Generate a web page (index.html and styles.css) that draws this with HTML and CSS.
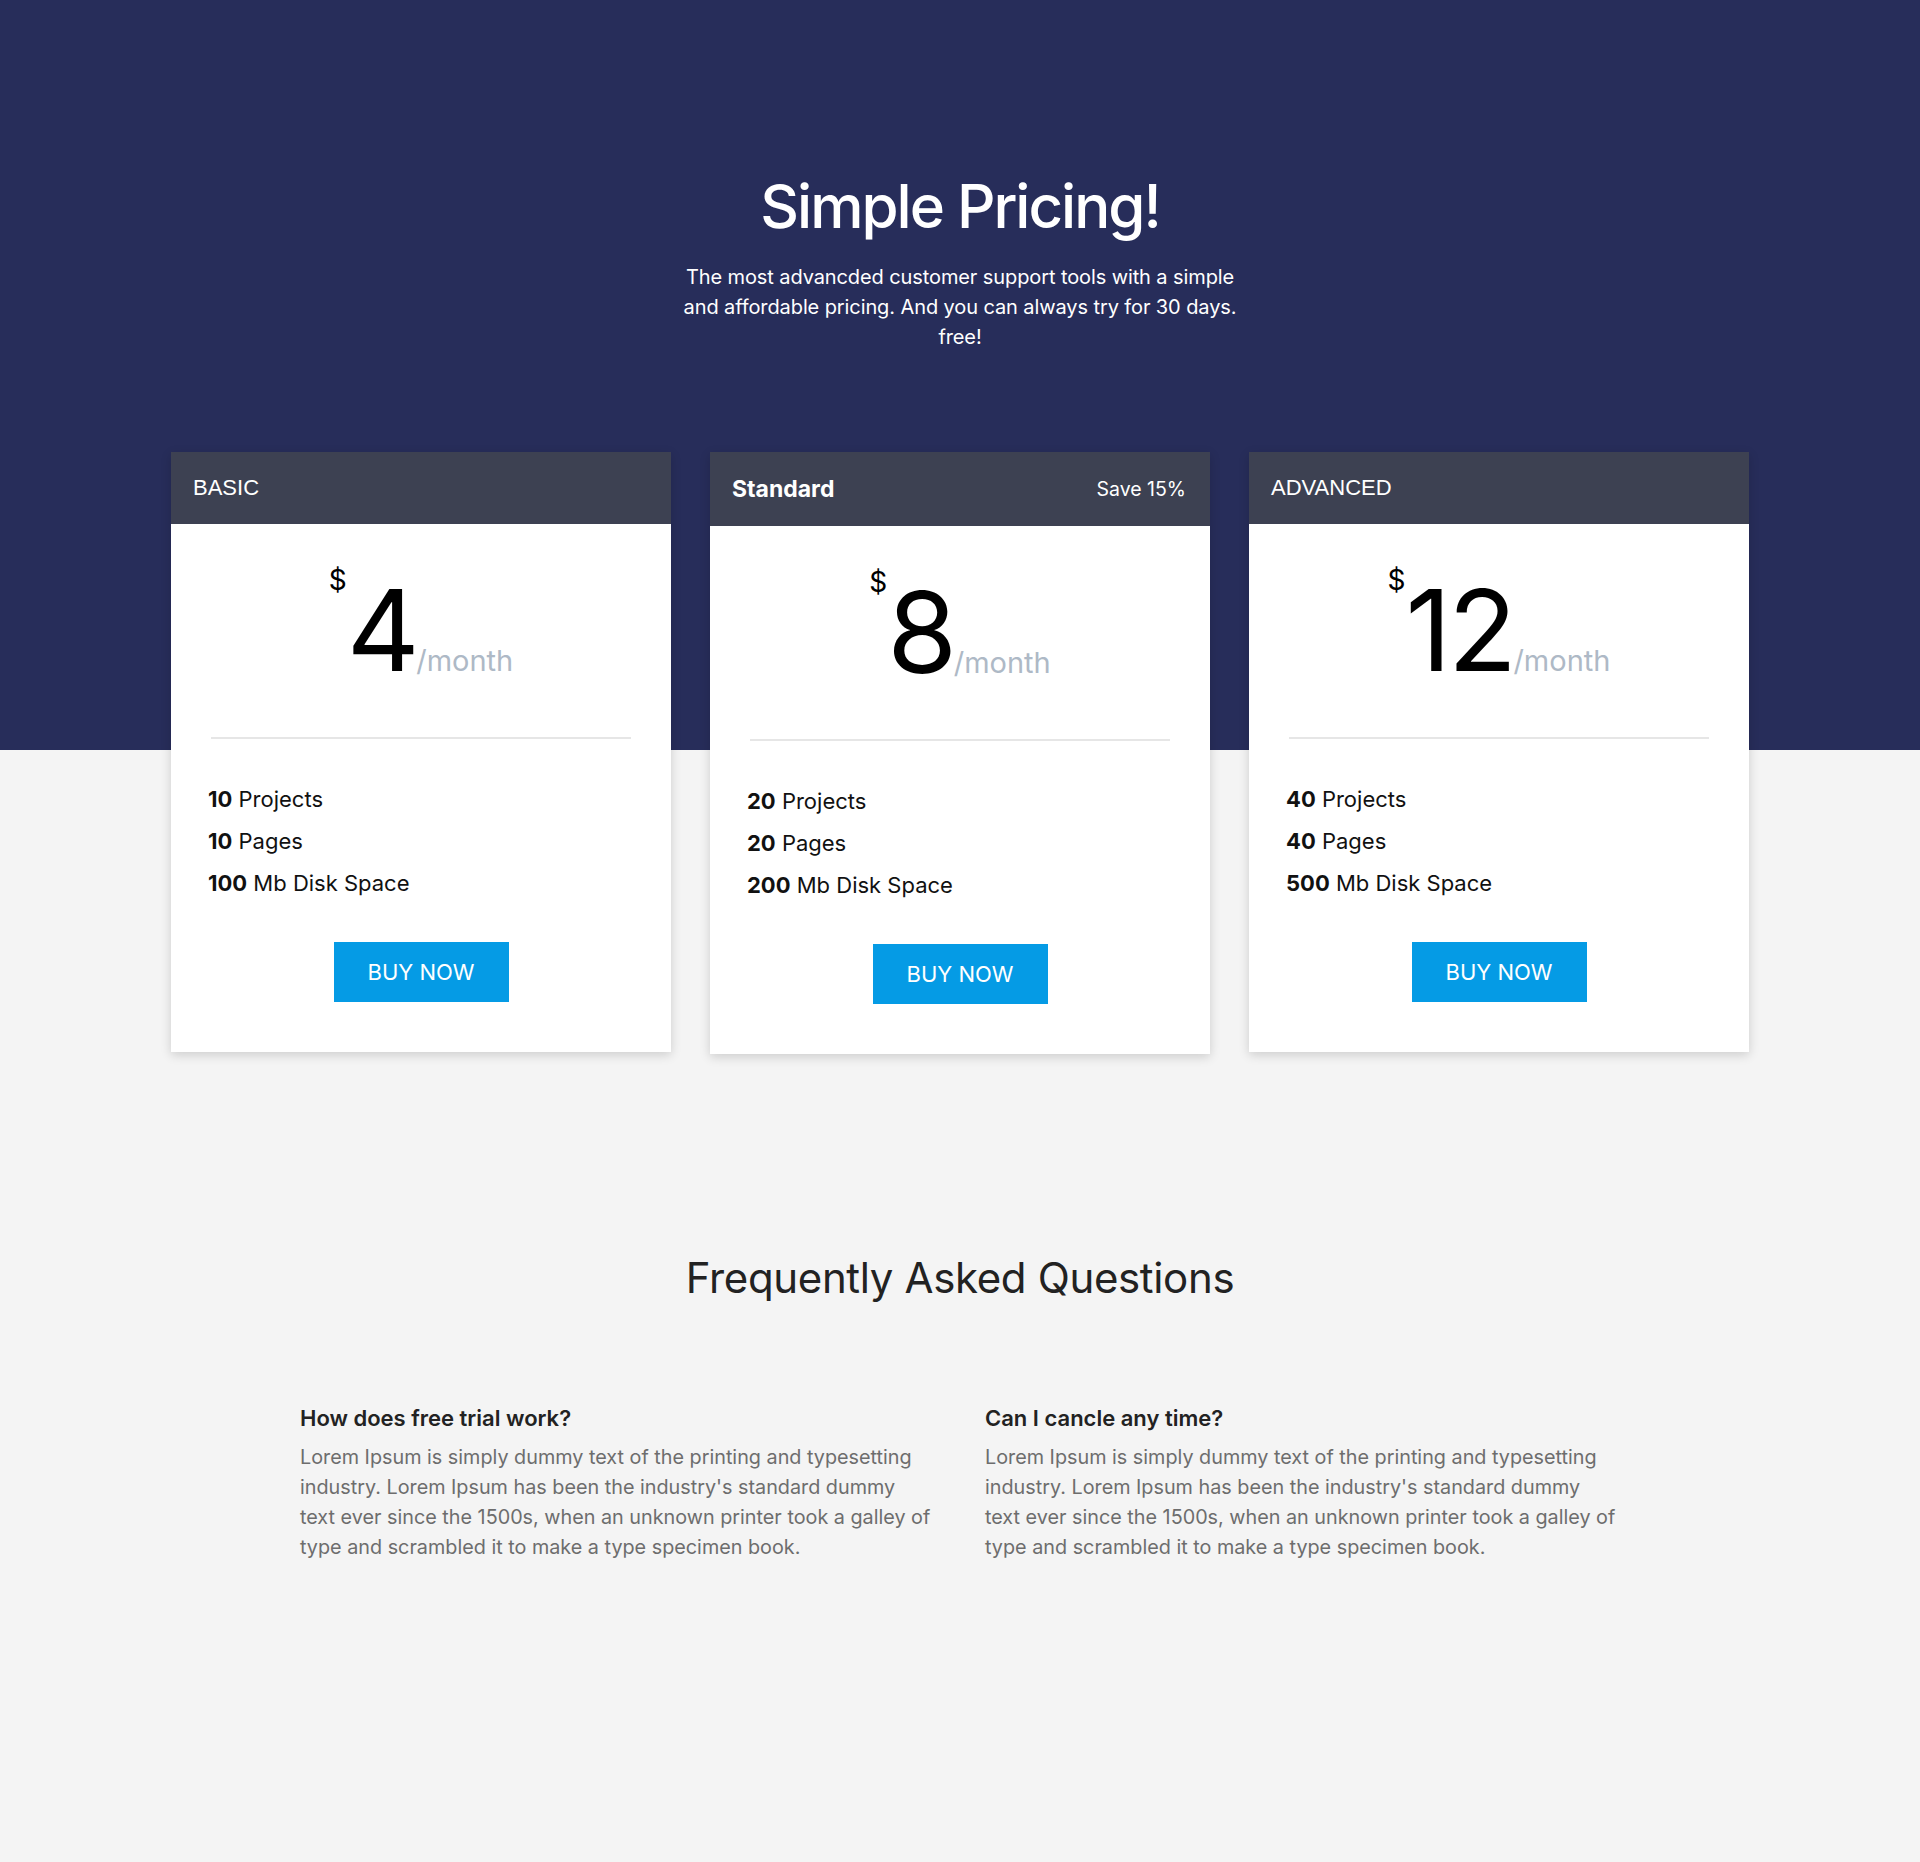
FILE: index.html
```html
<!DOCTYPE html>
<html lang="en">
<head>
<meta charset="utf-8">
<title>Simple Pricing</title>
<link rel="stylesheet" href="styles.css">
</head>
<body>
<div class="page">
  <header class="hero">
    <h1 class="hero-title">Simple Pricing!</h1>
    <p class="hero-sub">The most advancded customer support tools with a simple and affordable pricing. And you can always try for 30 days. free!</p>
  </header>

  <section class="plans">
    <article class="plan">
      <div class="plan-head"><span class="plan-name">BASIC</span></div>
      <div class="price"><span class="cur">$</span><span class="amount">4</span><span class="per">/month</span></div>
      <hr class="divider">
      <ul class="features">
        <li><b>10</b> Projects</li>
        <li><b>10</b> Pages</li>
        <li><b>100</b> Mb Disk Space</li>
      </ul>
      <div class="action"><a class="buy" href="#">BUY NOW</a></div>
    </article>

    <article class="plan">
      <div class="plan-head"><span class="plan-name strong">Standard</span><span class="save">Save 15%</span></div>
      <div class="price"><span class="cur">$</span><span class="amount">8</span><span class="per">/month</span></div>
      <hr class="divider">
      <ul class="features">
        <li><b>20</b> Projects</li>
        <li><b>20</b> Pages</li>
        <li><b>200</b> Mb Disk Space</li>
      </ul>
      <div class="action"><a class="buy" href="#">BUY NOW</a></div>
    </article>

    <article class="plan">
      <div class="plan-head"><span class="plan-name">ADVANCED</span></div>
      <div class="price"><span class="cur">$</span><span class="amount">12</span><span class="per">/month</span></div>
      <hr class="divider">
      <ul class="features">
        <li><b>40</b> Projects</li>
        <li><b>40</b> Pages</li>
        <li><b>500</b> Mb Disk Space</li>
      </ul>
      <div class="action"><a class="buy" href="#">BUY NOW</a></div>
    </article>
  </section>

  <section class="faq">
    <h2 class="faq-title">Frequently Asked Questions</h2>
    <div class="faq-grid">
      <div class="faq-item">
        <h3 class="q">How does free trial work?</h3>
        <p class="a">Lorem Ipsum is simply dummy text of the printing and typesetting industry. Lorem Ipsum has been the industry's standard dummy text ever since the 1500s, when an unknown printer took a galley of type and scrambled it to make a type specimen book.</p>
      </div>
      <div class="faq-item">
        <h3 class="q">Can I cancle any time?</h3>
        <p class="a">Lorem Ipsum is simply dummy text of the printing and typesetting industry. Lorem Ipsum has been the industry's standard dummy text ever since the 1500s, when an unknown printer took a galley of type and scrambled it to make a type specimen book.</p>
      </div>
    </div>
  </section>
</div>
</body>
</html>
```

FILE: styles.css
```css
* { box-sizing: border-box; }

html, body {
  margin: 0;
  padding: 0;
}

body {
  background: #f4f4f4;
  font-family: Inter, "Noto Sans", sans-serif;
  color: #111;
}

.page {
  min-height: 1862px;
  background: linear-gradient(to bottom, #272d5a 0, #272d5a 750px, #f4f4f4 750px);
}

.hero {
  padding-top: 170px;
  text-align: center;
  color: #fff;
}

.hero-title {
  margin: 0;
  font-size: 60px;
  line-height: 72px;
  font-weight: 500;
  letter-spacing: -2px;
}

.hero-sub {
  width: 565px;
  margin: 20px auto 0;
  font-size: 20px;
  line-height: 30px;
  letter-spacing: -0.1px;
}

.plans {
  margin-top: 100px;
  display: grid;
  grid-template-columns: repeat(3, 500px);
  column-gap: 39px;
  justify-content: center;
  align-items: start;
}

.plan {
  background: #fff;
  box-shadow: 0 3px 10px rgba(0, 0, 0, 0.16);
  padding-bottom: 50px;
}

.plan-head {
  background: #3d4152;
  color: #fff;
  padding: 23px 24px 23px 22px;
  display: flex;
  justify-content: space-between;
  align-items: center;
}

.plan-name {
  font-family: "Liberation Sans", Arial, sans-serif;
  font-size: 22px;
}

.plan-name.strong {
  font-family: Inter, sans-serif;
  font-size: 23px;
  font-weight: 700;
}

.save {
  font-size: 19.5px;
}

.price {
  padding-top: 42px;
  text-align: center;
  white-space: nowrap;
}

.cur {
  font-size: 28px;
  line-height: 1;
  vertical-align: top;
  color: #000;
}

.amount {
  font-size: 113px;
  line-height: 129px;
  letter-spacing: -3.5px;
  color: #000;
}

.per {
  font-size: 29px;
  color: #aeb9c6;
}

.divider {
  margin: 42px 40px 0;
  border: 0;
  height: 2px;
  background: #e6e6e6;
}

.features {
  list-style: none;
  margin: 39px 0 0;
  padding: 0 37px;
  font-size: 22px;
  line-height: 42px;
  color: #111;
}

.features b {
  font-weight: 700;
}

.action {
  margin-top: 38px;
  text-align: center;
}

.buy {
  display: inline-block;
  width: 175px;
  height: 60px;
  line-height: 60px;
  background: #059be5;
  color: #fff;
  font-size: 22px;
  text-decoration: none;
  text-align: center;
}

.faq {
  padding-top: 199px;
}

.faq-title {
  margin: 0;
  text-align: center;
  font-size: 42px;
  line-height: 1.2;
  font-weight: 400;
  letter-spacing: -0.35px;
  color: #222;
}

.faq-grid {
  margin: 102px auto 0;
  width: 1370px;
  display: grid;
  grid-template-columns: 685px 685px;
}

.faq-item {
  padding-left: 25px;
}

.q {
  margin: 0;
  font-size: 22px;
  line-height: 1.2;
  font-weight: 600;
  color: #222;
}

.a {
  margin: 10px 0 0;
  max-width: 634.5px;
  font-size: 19.8px;
  line-height: 30px;
  color: #6d6d6d;
}
```
